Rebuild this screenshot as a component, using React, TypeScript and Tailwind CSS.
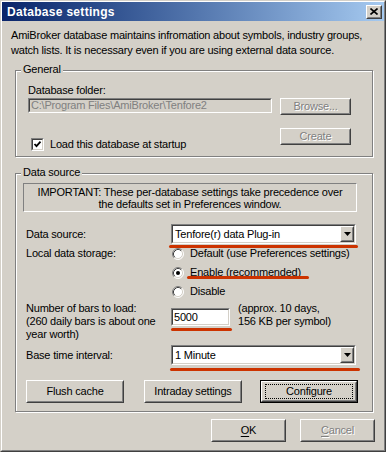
import React from "react";

const FONT = "font-['Liberation_Sans',Arial,sans-serif] text-[11px] tracking-[-0.2px]";
const disabledText = "text-[#808080] [text-shadow:1px_1px_0_#fff]";

function Raised({ children, className = "" }: { children: React.ReactNode; className?: string }) {
  return (
    <div className={`border border-t-white border-l-white border-r-[#404040] border-b-[#404040] ${className}`}>
      <div className="flex h-full w-full items-center justify-center border border-t-[#d4d0c8] border-l-[#d4d0c8] border-r-[#808080] border-b-[#808080] bg-[#d4d0c8]">
        {children}
      </div>
    </div>
  );
}

function Sunken({ children, className = "", inner = "bg-white" }: { children?: React.ReactNode; className?: string; inner?: string }) {
  return (
    <div className={`border border-t-[#808080] border-l-[#808080] border-r-white border-b-white ${className}`}>
      <div className={`flex h-full w-full items-center border border-t-[#404040] border-l-[#404040] border-r-[#d4d0c8] border-b-[#d4d0c8] ${inner}`}>
        {children}
      </div>
    </div>
  );
}

function Combo({ value }: { value: string }) {
  return (
    <Sunken className="h-[20px] w-[185px]">
      <span className="flex-1 pl-[2px] leading-[14px]">{value}</span>
      <Raised className="h-full w-[14px]">
        <svg width="7" height="4" viewBox="0 0 7 4">
          <path d="M0 0h7L3.5 4z" fill="#000" />
        </svg>
      </Raised>
    </Sunken>
  );
}

function Radio({ checked }: { checked?: boolean }) {
  return (
    <svg width="12" height="12" viewBox="0 0 12 12" className="shrink-0">
      <circle cx="6" cy="6" r="5" fill="#fff" />
      <path d="M2.11 9.89A5.5 5.5 0 0 1 9.89 2.11" stroke="#808080" fill="none" />
      <path d="M9.89 2.11A5.5 5.5 0 0 1 2.11 9.89" stroke="#fff" fill="none" />
      <path d="M2.82 9.18A4.5 4.5 0 0 1 9.18 2.82" stroke="#404040" fill="none" />
      <path d="M9.18 2.82A4.5 4.5 0 0 1 2.82 9.18" stroke="#d4d0c8" fill="none" />
      {checked && <circle cx="6" cy="6" r="2" fill="#000" />}
    </svg>
  );
}

function Group({ title, className = "", children }: { title: string; className?: string; children: React.ReactNode }) {
  return (
    <div className={`relative ml-[13px] w-[358px] border border-[#808080] shadow-[inset_1px_1px_0_#fff,1px_1px_0_#fff] ${className}`}>
      <span className="absolute -top-[8px] left-[5px] bg-[#d4d0c8] px-[2px] leading-[13px]">{title}</span>
      {children}
    </div>
  );
}

export default function App() {
  return (
    <div className={`h-[452px] w-[386px] bg-[#d4d0c8] text-black ${FONT} border border-t-[#d4d0c8] border-l-[#d4d0c8] border-r-[#404040] border-b-[#404040]`}>
      <div className="flex h-full flex-col border border-t-white border-l-white border-r-[#808080] border-b-[#808080]">
        {/* title bar */}
        <div className="flex h-[19px] shrink-0 items-center bg-gradient-to-r from-[#0a246a] to-[#a6caf0] pl-[5px] pr-[2px]">
          <span className="flex-1 text-[12px] font-bold tracking-[0.3px] text-white">Database settings</span>
          <Raised className="h-[14px] w-[16px]">
            <svg width="8" height="7" viewBox="0 0 8 7">
              <path d="M0.5 0.5L7.5 6.5M7.5 0.5L0.5 6.5" stroke="#000" strokeWidth="1.6" />
            </svg>
          </Raised>
        </div>

        <p className="pl-[9px] pt-[7px] leading-[15px]">
          AmiBroker database maintains infromation about symbols, industry groups,
          <br />
          watch lists. It is necessary even if you are using external data source.
        </p>

        {/* General */}
        <Group title="General" className="mt-[12px] h-[87px]">
          <div className="flex pl-[12px]">
            <div className="w-[244px] pt-[13px]">
              <div className="leading-[13px]">Database folder:</div>
              <Sunken className="mt-[1px] h-[15px] w-[244px]" inner="bg-[#d4d0c8]">
                <span className="pl-[1px] leading-[11px] text-[#808080]">C:\Program Files\AmiBroker\Tenfore2</span>
              </Sunken>
              <div className="ml-[3px] mt-[25px] flex items-center gap-[6px]">
                <Sunken className="h-[13px] w-[13px]">
                  <svg width="9" height="9" viewBox="0 0 9 9">
                    <path d="M1.5 4l2 2.2 4-4.5" stroke="#000" strokeWidth="1.8" fill="none" />
                  </svg>
                </Sunken>
                <span className="leading-[13px]">Load this database at startup</span>
              </div>
            </div>
            <div className="ml-[8px] pt-[27px]">
              <Raised className="h-[17px] w-[71px]">
                <span className={disabledText}>Browse...</span>
              </Raised>
              <Raised className="mt-[13px] h-[17px] w-[71px]">
                <span className={disabledText}>Create</span>
              </Raised>
            </div>
          </div>
        </Group>

        {/* Data source */}
        <Group title="Data source" className="mt-[16px]">
          <div className="ml-[7px] mt-[9px] flex h-[29px] w-[334px] items-center justify-center border border-t-[#808080] border-l-[#808080] border-r-white border-b-white text-center leading-[12px]">
            IMPORTANT: These per-database settings take precedence over
            <br />
            the defaults set in Preferences window.
          </div>

          <div className="mt-[12px] flex items-center pl-[10px]">
            <span className="w-[145px]">Data source:</span>
            <div className="relative">
              <Combo value="Tenfore(r) data Plug-in" />
              <div className="absolute -left-[2px] top-[21px] h-[3px] w-[189px] rounded-full bg-[#cc3300]" />
            </div>
          </div>

          <div className="flex pl-[10px]">
            <span className="flex h-[19px] w-[145px] items-center">Local data storage:</span>
            <div className="flex flex-col pl-[1px]">
              <div className="flex h-[19px] items-center gap-[6px]">
                <Radio />
                <span>Default (use Preferences settings)</span>
              </div>
              <div className="flex h-[19px] items-center gap-[6px]">
                <Radio checked />
                <span className="relative">
                  Enable (recommended)
                  <span className="absolute -left-[3px] top-[12px] h-[3px] w-[122px] rounded-full bg-[#cc3300]" />
                </span>
              </div>
              <div className="flex h-[19px] items-center gap-[6px]">
                <Radio />
                <span>Disable</span>
              </div>
            </div>
          </div>

          <div className="mt-[1px] flex items-start pl-[10px]">
            <span className="w-[145px] leading-[13px]">
              Number of bars to load:
              <br />
              (260 daily bars is about one
              <br />
              year worth)
            </span>
            <div className="relative mt-[6px]">
              <Sunken className="h-[18px] w-[59px]">
                <span className="pl-[1px]">5000</span>
              </Sunken>
              <div className="absolute left-0 top-[20px] h-[3px] w-[61px] rounded-full bg-[#cc3300]" />
            </div>
            <span className="ml-[8px] leading-[13px]">
              (approx. 10 days,
              <br />
              156 KB per symbol)
            </span>
          </div>

          <div className="mt-[4px] flex items-center pl-[10px]">
            <span className="w-[145px]">Base time interval:</span>
            <div className="relative">
              <Combo value="1 Minute" />
              <div className="absolute -left-[1px] top-[23px] h-[3px] w-[190px] rounded-full bg-[#cc3300]" />
            </div>
          </div>

          <div className="mb-[8px] mt-[15px] flex pl-[10px]">
            <Raised className="h-[23px] w-[98px]">Flush cache</Raised>
            <Raised className="ml-[20px] h-[23px] w-[98px]">Intraday settings</Raised>
            <div className="ml-[18px] h-[23px] w-[98px] border border-black">
              <Raised className="h-full w-full">
                <span className="flex h-[15px] w-[88px] items-center justify-center border border-dotted border-black">
                  Configure
                </span>
              </Raised>
            </div>
          </div>
        </Group>

        <div className="mt-[7px] flex justify-end gap-[14px] pr-[9px]">
          <Raised className="h-[23px] w-[75px]">
            <span>
              <span className="underline underline-offset-2">O</span>K
            </span>
          </Raised>
          <Raised className="h-[23px] w-[75px]">
            <span className={disabledText}>
              <span className="underline underline-offset-2">C</span>ancel
            </span>
          </Raised>
        </div>
      </div>
    </div>
  );
}
